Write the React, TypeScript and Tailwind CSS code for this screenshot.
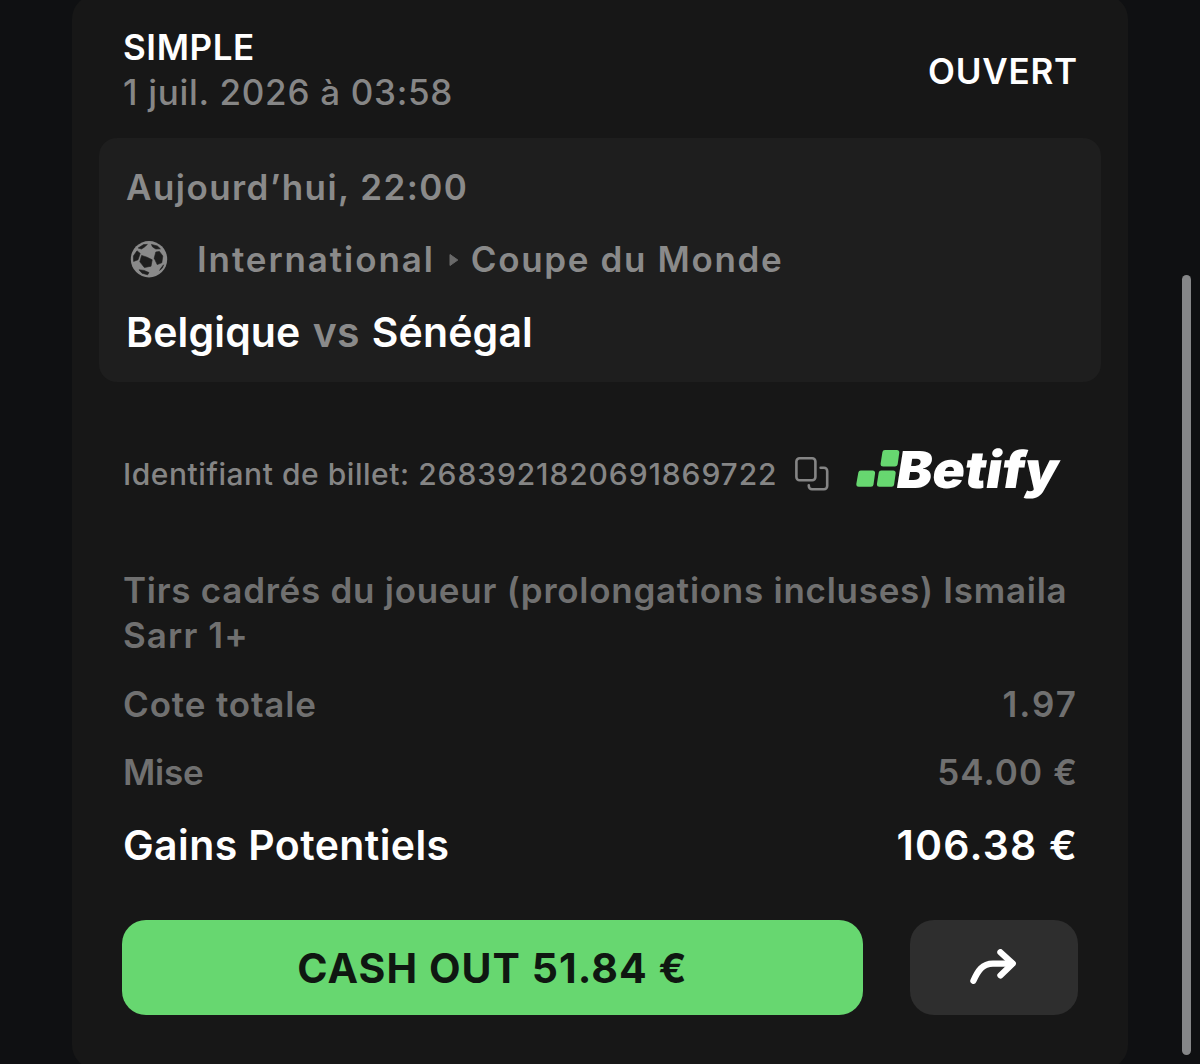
function FootballIcon() {
  return (
    <svg width="38" height="38" viewBox="0 0 38 38" className="shrink-0">
      <circle cx="19" cy="18.2" r="18.2" fill="#8a8a8a" />
      <g fill="#1e1e1e" stroke="#1e1e1e" strokeWidth="0.6" strokeLinejoin="round">
        <path d="M11.6 14.4 17 16.2 22.2 18.8 21 25.2 14.4 26.6 9.8 20.8Z" />
        <path d="M25.8 11 29.4 10.4 32.8 15 31.8 21.8 27.2 23.6 24.2 17.2Z" />
        <path d="M3.4 15 7 9.8 10.2 12.4 8 18.8 3.6 20.4Z" />
        <path d="M8.2 7 13.6 3.6 17.4 3.4 14 6.4 11.4 8Z" />
        <path d="M21.4 3.4 27.4 5 30.4 7.8 25.8 8 22.6 6Z" />
        <path d="M9 28.8 14 29.4 19 31.6 17.6 33.8 12 32.2Z" />
        <path d="M29.6 29.4 31 27 33.6 23.8 32.4 27Z" />
      </g>
    </svg>
  );
}

function CopyIcon() {
  return (
    <svg
      width="34"
      height="34"
      viewBox="0 0 34 34"
      fill="none"
      stroke="#858585"
      strokeWidth="2.6"
      strokeLinecap="round"
      className="shrink-0"
    >
      <rect x="1.4" y="1.3" width="19" height="22" rx="3.2" />
      <path d="M25.6 10.7h3.4a3.2 3.2 0 0 1 3.2 3.2v15.2a3.2 3.2 0 0 1-3.2 3.2H17a3.2 3.2 0 0 1-3.2-3.2v-.8" />
    </svg>
  );
}

function BetifyLogo() {
  return (
    <svg width="220" height="80" viewBox="0 -10 220 80" className="shrink-0">
      <g fill="#67d770" stroke="#67d770" strokeWidth="5" strokeLinejoin="round">
        <path d="M5.8 29H17.6L16 40.3H3.8Z" />
        <path d="M26.2 29H38.2L36.6 40.3H24.4Z" />
        <path d="M29.9 8.5H41.8L40.2 20H28.1Z" />
      </g>
      <g transform="translate(41 43.5) skewX(-9)">
        <text
          x="-1.5"
          y="0"
          textLength="162"
          lengthAdjust="spacingAndGlyphs"
          fill="#ffffff"
          className="font-['Inter',sans-serif] text-[51px] font-black"
        >
          Betify
        </text>
      </g>
    </svg>
  );
}

function ShareIcon() {
  return (
    <svg
      width="50"
      height="38"
      viewBox="0 0 50 38"
      fill="none"
      stroke="#ffffff"
      strokeWidth="6.2"
      strokeLinecap="round"
      strokeLinejoin="round"
    >
      <path d="M4.4 31.8C8.8 22 13.2 14.6 24 14.6H43" />
      <path d="M31.4 3.2 43.8 14.6 31.4 26.4" />
    </svg>
  );
}

function Row({
  label,
  value,
  labelClass,
  valueClass,
}: {
  label: string;
  value: string;
  labelClass: string;
  valueClass: string;
}) {
  return (
    <div className="flex items-center justify-between text-[35px] font-semibold leading-[45px] text-[#707070]">
      <span className={labelClass}>{label}</span>
      <span className={valueClass}>{value}</span>
    </div>
  );
}

export default function App() {
  return (
    <div className="flex h-[1064px] w-[1200px] items-start overflow-hidden bg-[#0f1012] pl-[72px] font-['Inter',sans-serif]">
      <div className="-mt-[5px] h-[1074px] w-[1056px] shrink-0 rounded-[24px] bg-[#171717] px-[51px] pt-[30px]">
        <div className="flex h-[90px] items-center justify-between">
          <div className="text-[35px] leading-[45px]">
            <p className="font-semibold tracking-[0.6px] text-white">SIMPLE</p>
            <p className="font-medium tracking-[0.7px] text-[#868686]">1 juil. 2026 à 03:58</p>
          </div>
          <span className="-mr-px pt-[2px] text-[35px] font-semibold leading-[45px] tracking-[0.8px] text-white">
            OUVERT
          </span>
        </div>

        <div className="-mx-6 mt-[23px] h-[244px] rounded-[18px] bg-[#1e1e1e] px-[27px] pt-[27px]">
          <p className="text-[35px] font-semibold leading-[45px] tracking-[1.45px] text-[#8a8a8a]">Aujourd’hui, 22:00</p>
          <div className="mt-[27px] flex items-center pl-1 text-[35px] font-semibold leading-[45px] text-[#8a8a8a]">
            <FootballIcon />
            <span className="ml-[29px] tracking-[1.9px]">International</span>
            <svg width="10" height="14" viewBox="0 0 10 14" className="ml-[14px] mr-3">
              <path d="M1 1.5 8.8 7 1 12.5Z" fill="#6a6a6a" stroke="#6a6a6a" strokeLinejoin="round" />
            </svg>
            <span className="tracking-[1.65px]">Coupe du Monde</span>
          </div>
          <p className="mt-[25px] text-[41px] font-semibold leading-[50px] tracking-[0.15px] text-white [word-spacing:1.7px]">
            Belgique <span className="text-[#8a8a8a]">vs</span> Sénégal
          </p>
        </div>

        <div className="mt-[62px] flex h-[60px] items-center">
          <p className="w-[672px] whitespace-nowrap text-[30px] font-medium leading-[40px] text-[#858585]">
            <span className="tracking-[0.54px]">Identifiant de billet: </span>
            <span className="tracking-[0.9px]">2683921820691869722</span>
          </p>
          <CopyIcon />
          <span className="ml-[26px]">
            <BetifyLogo />
          </span>
        </div>

        <p className="mt-[64px] whitespace-nowrap text-[35px] font-semibold leading-[45px] tracking-[0.73px] text-[#707070]">
          Tirs cadrés du joueur (prolongations incluses) Ismaila
          <br />
          <span className="tracking-[1.1px]">Sarr 1+</span>
        </p>

        <div className="mt-6">
          <Row label="Cote totale" value="1.97" labelClass="tracking-[0.85px]" valueClass="-mt-px -mr-px tracking-[2px]" />
          <div className="mb-[25px] mt-[23px]">
            <Row label="Mise" value="54.00 €" labelClass="-tracking-[0.2px]" valueClass="-mr-px tracking-[1.1px]" />
          </div>
          <div className="flex items-center justify-between text-[41px] font-semibold leading-[50px] text-white">
            <span className="tracking-[0.4px]">Gains Potentiels</span>
            <span className="-mr-px tracking-[1.2px]">106.38 €</span>
          </div>
        </div>

        <div className="-ml-px mt-[50px] flex">
          <button className="h-[95px] w-[741px] shrink-0 rounded-[24px] bg-[#67d770] pt-[2px] text-[41px] font-bold tracking-[1.05px] text-[#0f1711]">
            CASH OUT 51.84 €
          </button>
          <button className="ml-[47px] flex h-[95px] w-[168px] shrink-0 items-center justify-center rounded-[24px] bg-[#2e2e2e]">
            <ShareIcon />
          </button>
        </div>
      </div>

      <div className="ml-[54px] mt-[275px] h-[780px] w-[9px] shrink-0 rounded-full bg-[#858688]" />
    </div>
  );
}
